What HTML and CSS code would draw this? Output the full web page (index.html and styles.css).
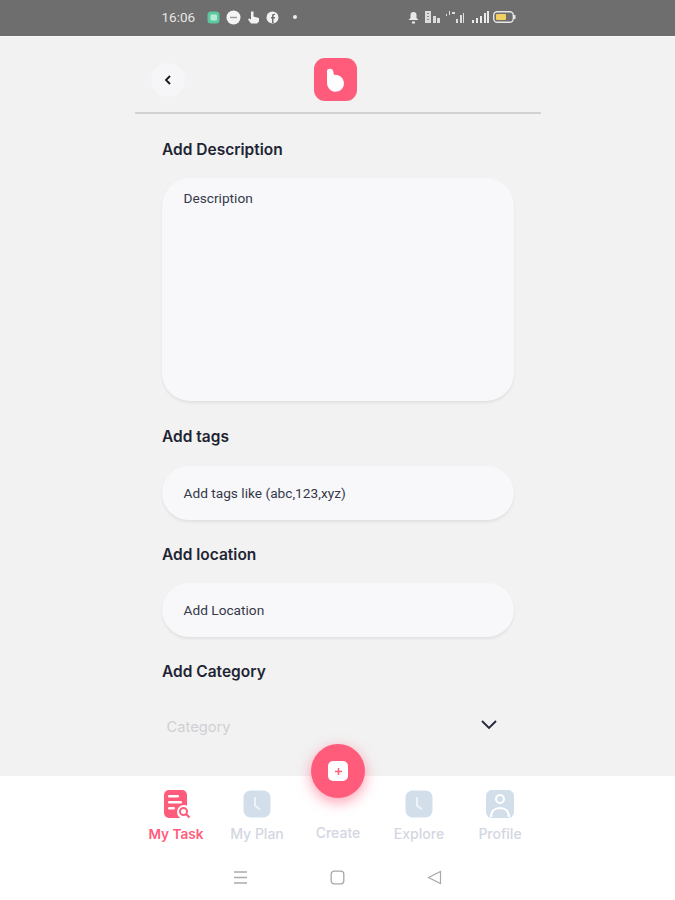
FILE: index.html
```html
<!DOCTYPE html>
<html lang="en">
<head>
<meta charset="utf-8">
<title>Add Task</title>
<link rel="stylesheet" href="styles.css">
</head>
<body>
<div class="screen">
  <div class="status">
    <div class="status-row">
      <div class="status-left">
        <span class="time">16:06</span>
        <svg class="si" width="13" height="13" viewBox="0 0 13 13"><rect x="0.5" y="0.5" width="12" height="12" rx="3.5" fill="#5cc8a0"/><rect x="3.5" y="3.5" width="6.5" height="6" rx="1" fill="#b5ecd5"/></svg>
        <svg class="si" width="15" height="15" viewBox="0 0 15 15"><circle cx="7.5" cy="7.5" r="7" fill="#f4f4f4"/><rect x="4" y="6.8" width="7" height="1.4" fill="#9a9a9a"/></svg>
        <svg class="si" width="13" height="14" viewBox="0 0 13 14"><path d="M4 1.5h2.500v5l5.500 1.500v3.500l-2 2H4L1 9.500l1-1 2 1z" fill="#f2f2f2"/></svg>
        <svg class="si" width="13" height="13" viewBox="0 0 13 13"><circle cx="6.500" cy="6.500" r="6" fill="#f2f2f2"/><path d="M7.500 12V7.500h1.500V6H7.500V4.800c0-.6.300-.8 1.500-.8V2.800C6.800 2.500 6 3.400 6 4.800V6H5v1.500h1V12z" fill="#6e6e6e"/></svg>
        <span class="dot"></span>
      </div>
      <div class="status-right">
        <svg width="11" height="13" viewBox="0 0 11 13"><path d="M5.500 1a3 3 0 0 1 3 3v3l2 2H.500l2-2V4a3 3 0 0 1 3-3z" fill="#e8e8e8"/><rect x="4" y="10.500" width="3" height="2" fill="#e8e8e8"/></svg>
        <svg width="15" height="12" viewBox="0 0 15 12"><path d="M0 0h6v12H0zM8 5h3v7H8zM12 7h3v5h-3z" fill="#dcdcdc"/><path d="M2 2h2v1H2zM2 5h2v1H2zM2 8h2v1H2z" fill="#8a8a8a"/></svg>
        <svg width="18" height="12" viewBox="0 0 18 12"><path d="M0 3h1v2H0zM3 0h1v4H3zM6 1h3v2H6zM10 8h2v4h-2zM14 4h2v8h-2zM17 2h1v10h-1z" fill="#dedede"/></svg>
        <svg class="bars" width="17" height="12" viewBox="0 0 17 12"><path d="M0 9h2v3H0zM4 7h2v5H4zM8 5h2v7H8zM12 2h2v10h-2zM15 0h2v12h-2z" fill="#ececec"/></svg>
        <svg width="23" height="12" viewBox="0 0 23 12"><rect x="0.700" y="0.700" width="19.600" height="10.600" rx="3.500" fill="none" stroke="#e6e6e6" stroke-width="1.400"/><rect x="3" y="3" width="10" height="6" rx="1" fill="#f0d060"/><rect x="21" y="4" width="1.500" height="4" fill="#e6e6e6"/></svg>
      </div>
    </div>
  </div>

  <main class="main">
    <header class="header">
      <button class="back" aria-label="Back">
        <svg width="8" height="10" viewBox="0 0 8 10"><path d="M6 1 2 5l4 4" fill="none" stroke="#16181f" stroke-width="1.800"/></svg>
      </button>
      <div class="logo">
        <svg width="22" height="28" viewBox="0 0 22 28"><path d="M2 5c0-2.500 5-3 6-.5L9 9a8.500 8.500 0 1 1-7 8z" fill="#fff"/></svg>
      </div>
    </header>

    <form class="form">
      <label class="label">Add Description</label>
      <div class="field area"><span class="hint">Description</span></div>
      <label class="label">Add tags</label>
      <div class="field pill"><span class="hint">Add tags like (abc,123,xyz)</span></div>
      <label class="label">Add location</label>
      <div class="field pill"><span class="hint">Add Location</span></div>
      <label class="label">Add Category</label>
      <div class="select">
        <span class="select-text">Category</span>
        <svg width="18" height="11" viewBox="0 0 18 11"><path d="M2 2l7 7 7-7" fill="none" stroke="#23273a" stroke-width="1.800"/></svg>
      </div>
    </form>
  </main>

  <nav class="tabbar">
    <div class="fab">
      <div class="fab-inner">
        <svg width="9" height="9" viewBox="0 0 9 9"><path d="M4.500 1v7M1 4.500h7" stroke="#ff5c7c" stroke-width="1.500"/></svg>
      </div>
    </div>
    <div class="tabs">
      <div class="tab active">
        <svg width="30" height="30" viewBox="0 0 30 30">
          <rect x="3" y="1" width="23" height="28" rx="5" fill="#ff5c7c"/>
          <rect x="7" y="6" width="11" height="2.500" rx="1.200" fill="#fff"/>
          <rect x="7" y="12" width="14" height="2.500" rx="1.200" fill="#fff"/>
          <rect x="7" y="18" width="7" height="2.500" rx="1.200" fill="#fff"/>
          <circle cx="23" cy="23" r="7" fill="#fff"/>
          <circle cx="22.500" cy="22.500" r="3.500" fill="none" stroke="#ff5c7c" stroke-width="2"/>
          <path d="M25 25l3.500 3.500" stroke="#ff5c7c" stroke-width="2.200"/>
        </svg>
        <span>My Task</span>
      </div>
      <div class="tab">
        <svg width="30" height="30" viewBox="0 0 30 30"><rect x="1.500" y="1.500" width="27" height="27" rx="7" fill="#d2dfeb"/><path d="M13 8v8.500l5 4" fill="none" stroke="#edf3f8" stroke-width="2"/></svg>
        <span>My Plan</span>
      </div>
      <div class="tab">
        <div class="tab-gap"></div>
        <span>Create</span>
      </div>
      <div class="tab">
        <svg width="30" height="30" viewBox="0 0 30 30"><rect x="1.500" y="1.500" width="27" height="27" rx="7" fill="#d2dfeb"/><path d="M13 8v8.500l5 4" fill="none" stroke="#edf3f8" stroke-width="2"/></svg>
        <span>Explore</span>
      </div>
      <div class="tab">
        <svg width="30" height="30" viewBox="0 0 30 30"><rect x="1" y="1" width="28" height="28" rx="6" fill="#d2dfeb"/><circle cx="15" cy="10" r="4" fill="none" stroke="#fff" stroke-width="2"/><path d="M6 28c0-6 4-9 9-9s9 3 9 9" fill="none" stroke="#fff" stroke-width="2.200"/></svg>
        <span>Profile</span>
      </div>
    </div>
    <div class="sysnav">
      <svg width="15" height="15" viewBox="0 0 15 15"><path d="M1 2h13M1 7.500h13M1 13h13" stroke="#ababab" stroke-width="1.300"/></svg>
      <svg width="15" height="15" viewBox="0 0 15 15"><rect x="1.200" y="1.200" width="12.600" height="12.600" rx="3" fill="none" stroke="#a8a8a8" stroke-width="1.300"/></svg>
      <svg width="15" height="15" viewBox="0 0 15 15"><path d="M1.500 7.500 13.500 1.500v12z" fill="none" stroke="#a8a8a8" stroke-width="1.200"/></svg>
    </div>
  </nav>
</div>
</body>
</html>
```

FILE: styles.css
```css
* { box-sizing: border-box; }
html, body { margin: 0; padding: 0; }
body { font-family: Inter, "Liberation Sans", sans-serif; background: #f2f2f2; }
.screen { width: 675px; height: 900px; display: flex; flex-direction: column; overflow: hidden; position: relative; }

.status { height: 37px; background: #6e6e6e; border-bottom: 1px solid #f8f8f8; flex: none; display: flex; justify-content: center; }
.status-row { width: 406px; padding: 0 25px 2px 27px; display: flex; justify-content: space-between; align-items: center; }
.status-left { display: flex; align-items: center; gap: 6px; }
.status-right { display: flex; align-items: center; gap: 6px; }
.bars { margin-left: 2px; margin-right: -2px; }
.time { font-family: Roboto, sans-serif; font-size: 13.500px; color: #e6e6e6; margin-right: 6px; }
.dot { width: 4px; height: 4px; border-radius: 50%; background: #eee; margin-left: 8px; }

.main { flex: 1; display: flex; flex-direction: column; align-items: center; min-height: 0; }
.header { width: 406px; height: 77px; border-bottom: 2px solid #d2d2d2; position: relative; display: flex; justify-content: center; align-items: center; padding: 10px 4px 0 0; flex: none; }
.back { position: absolute; left: 16px; top: 26px; width: 34px; height: 34px; border: 0; border-radius: 50%; background: #f6f6f8; padding: 0; display: flex; align-items: center; justify-content: center; }
.logo { width: 43px; height: 43px; border-radius: 11px; background: #ff5c7c; display: flex; align-items: center; justify-content: center; }

.form { width: 352px; padding-top: 26px; display: flex; flex-direction: column; }
.label { font-size: 15.500px; line-height: 20px; font-weight: 600; color: #1e2433; padding-left: 0.500px; }
.field { background: #f8f8fa; box-shadow: 0 2px 3px rgba(0,0,0,.07); padding-left: 22px; }
.area { height: 223px; border-radius: 28px; margin: 18px 0 26px; padding-top: 12px; }
.pill { height: 54px; border-radius: 27px; margin: 18.500px 0 25px; display: flex; align-items: center; }
.hint { font-family: Roboto, sans-serif; font-size: 13.700px; line-height: 16px; color: #35394a; display: block; }
.select { display: flex; justify-content: space-between; align-items: center; padding: 31px 16px 0 5px; }
.select-text { font-size: 14.700px; color: #cfd0d3; margin-top: 5px; }

.tabbar { height: 124px; background: #fff; flex: none; position: relative; display: flex; flex-direction: column; align-items: center; }
.fab { position: absolute; left: 311px; top: -32px; width: 54px; height: 54px; border-radius: 50%; background: #ff5c7c; box-shadow: 0 4px 14px rgba(255,92,124,.6); display: flex; align-items: center; justify-content: center; }
.fab-inner { width: 20px; height: 20px; border-radius: 5px; background: #fff; display: flex; align-items: center; justify-content: center; }
.tabs { display: grid; grid-template-columns: repeat(5, 81px); padding: 13px 0 0 1px; }
.tab { display: flex; flex-direction: column; align-items: center; gap: 6px; font-size: 14px; font-weight: 500; line-height: 18px; color: #d3d6e2; }
.tab.active { color: #ff5c7c; font-size: 13.600px; font-weight: 600; }
.tab-gap { height: 29px; }
.sysnav { display: flex; gap: 82px; margin-top: 27px; }
.sysnav svg { display: block; }
```
